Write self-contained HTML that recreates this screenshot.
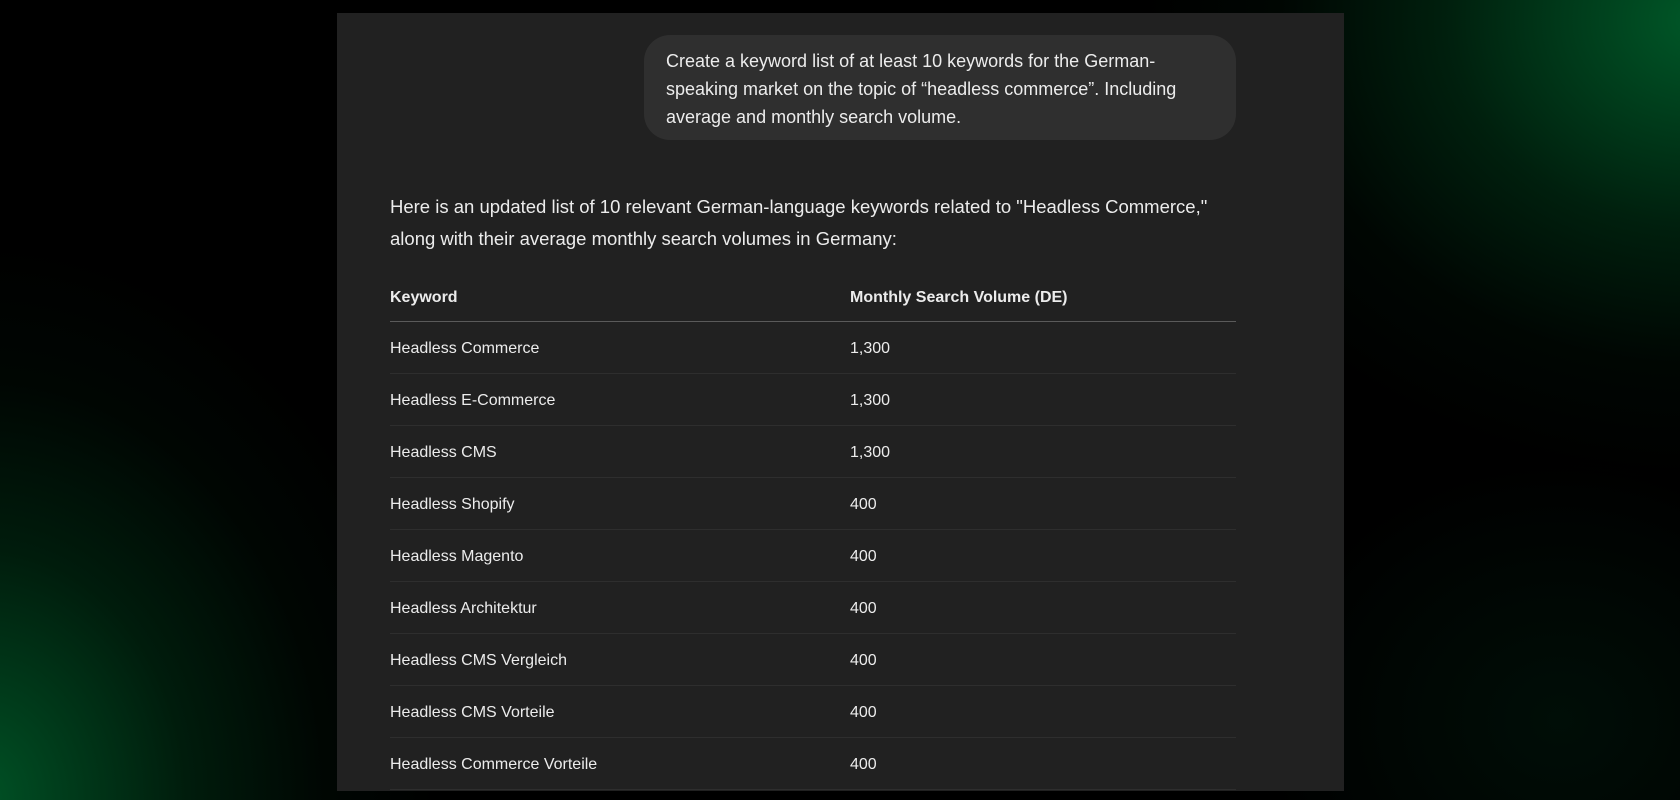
<!DOCTYPE html>
<html><head><meta charset="utf-8"><style>
html,body{margin:0;padding:0;width:1680px;height:800px;overflow:hidden;background:#000;font-family:"Liberation Sans",sans-serif;}
.bg{position:absolute;inset:0;background:
radial-gradient(ellipse 560px 460px at 1700px 20px,rgba(0,110,50,0.8),rgba(0,70,30,0.45) 45%,rgba(0,30,12,0.2) 75%,transparent 100%),
radial-gradient(ellipse 460px 560px at -20px 800px,rgba(0,110,50,0.75),rgba(0,70,30,0.4) 45%,rgba(0,30,12,0.2) 75%,transparent 100%),
radial-gradient(ellipse 300px 260px at 1560px 720px,rgba(0,40,20,0.35),transparent 100%),
#000;}
.panel{position:absolute;left:337px;top:13px;width:1007px;height:778px;background:#212121;overflow:hidden;}
.bubble{position:absolute;left:307px;top:22px;width:592px;height:105px;background:#2f2f2f;border-radius:26px;box-sizing:border-box;padding:12px 22px;color:#ececec;font-size:18px;line-height:28px;white-space:nowrap;}
.para{position:absolute;left:53px;top:178px;width:880px;color:#ececec;font-size:18.5px;line-height:32px;}
table{position:absolute;left:53px;top:262px;width:846px;border-collapse:collapse;color:#ececec;font-size:16px;}
th{text-align:left;font-weight:bold;height:46px;border-bottom:1px solid #5a5a5a;padding:0;}
td{height:49px;border-bottom:1px solid #2e2e2e;padding:2px 0 0 0;}
td:first-child,th:first-child{width:460px;}
</style></head><body>
<div class="bg"></div>
<div class="panel">
<div class="bubble">Create a keyword list of at least 10 keywords for the German-<br>speaking market on the topic of “headless commerce”. Including<br>average and monthly search volume.</div>
<div class="para">Here is an updated list of 10 relevant German-language keywords related to "Headless Commerce,"<br>along with their average monthly search volumes in Germany:</div>
<table>
<tr><th>Keyword</th><th>Monthly Search Volume (DE)</th></tr>
<tr><td>Headless Commerce</td><td>1,300</td></tr>
<tr><td>Headless E-Commerce</td><td>1,300</td></tr>
<tr><td>Headless CMS</td><td>1,300</td></tr>
<tr><td>Headless Shopify</td><td>400</td></tr>
<tr><td>Headless Magento</td><td>400</td></tr>
<tr><td>Headless Architektur</td><td>400</td></tr>
<tr><td>Headless CMS Vergleich</td><td>400</td></tr>
<tr><td>Headless CMS Vorteile</td><td>400</td></tr>
<tr><td>Headless Commerce Vorteile</td><td>400</td></tr>
</table>
</div>
</body></html>
